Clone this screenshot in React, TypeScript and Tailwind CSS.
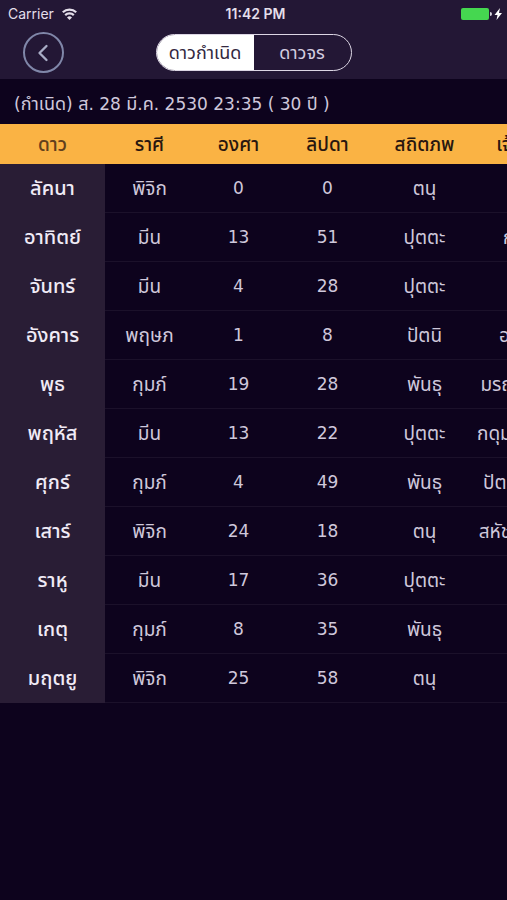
import React, { useState } from 'react';
import { ChevronLeft } from 'lucide-react';

interface PlanetRow {
  planet: string;
  sign: string;
  degree: number;
  minute: number;
  house: string;
  lord: string;
}

const rows: PlanetRow[] = [
  { planet: 'ลัคนา', sign: 'พิจิก', degree: 0, minute: 0, house: 'ตนุ', lord: '' },
  { planet: 'อาทิตย์', sign: 'มีน', degree: 13, minute: 51, house: 'ปุตตะ', lord: 'กรรมะ' },
  { planet: 'จันทร์', sign: 'มีน', degree: 4, minute: 28, house: 'ปุตตะ', lord: '' },
  { planet: 'อังคาร', sign: 'พฤษภ', degree: 1, minute: 8, house: 'ปัตนิ', lord: 'อริ, ตนุ' },
  { planet: 'พุธ', sign: 'กุมภ์', degree: 19, minute: 28, house: 'พันธุ', lord: 'มรณะ, ลาภะ' },
  { planet: 'พฤหัส', sign: 'มีน', degree: 13, minute: 22, house: 'ปุตตะ', lord: 'กดุมภะ, ปุตตะ' },
  { planet: 'ศุกร์', sign: 'กุมภ์', degree: 4, minute: 49, house: 'พันธุ', lord: 'ปัตนิ, วินาศ' },
  { planet: 'เสาร์', sign: 'พิจิก', degree: 24, minute: 18, house: 'ตนุ', lord: 'สหัชชะ, พันธุ' },
  { planet: 'ราหู', sign: 'มีน', degree: 17, minute: 36, house: 'ปุตตะ', lord: '' },
  { planet: 'เกตุ', sign: 'กุมภ์', degree: 8, minute: 35, house: 'พันธุ', lord: '' },
  { planet: 'มฤตยู', sign: 'พิจิก', degree: 25, minute: 58, house: 'ตนุ', lord: '' },
];

const StatusBar: React.FC = () => (
  <div className="grid h-7 grid-cols-3 items-center pl-2 pr-1 font-['Inter',sans-serif] text-sm text-[#e4dfea]">
    <div className="flex items-center gap-2">
      <span>Carrier</span>
      <svg width="15" height="12" viewBox="0 0 15 12" fill="none" stroke="currentColor" strokeWidth="2.2" aria-hidden>
        <path d="M.8 4.3a9.6 9.6 0 0 1 13.4 0" />
        <path d="M3.2 7.1a6.2 6.2 0 0 1 8.6 0" />
        <path d="M7.5 12L5 9.4a3.6 3.6 0 0 1 5 0z" fill="currentColor" stroke="none" />
      </svg>
    </div>
    <span className="text-center font-semibold">11:42 PM</span>
    <svg className="justify-self-end" width="42" height="14" viewBox="0 0 42 14" aria-hidden>
      <rect x="0" y="1" width="28" height="12" rx="2" fill="#45d750" />
      <path d="M29 5q2 0 2 2t-2 2z" fill="#d9d5e0" />
      <path d="M39 1l-5.500 7h3l-1 5 5.500-7h-3z" fill="#fff" />
    </svg>
  </div>
);

const App: React.FC = () => {
  const [tab, setTab] = useState<'birth' | 'transit'>('birth');

  const tabClass = (active: boolean) =>
    active ? 'flex-1 bg-white text-[#33283f]' : 'flex-1 bg-transparent text-[#d5cee0]';

  return (
    <div className="min-h-screen bg-[#0d031d] font-['DejaVu_Sans','Noto_Sans_Thai',sans-serif] text-[#cfc8db]">
      <header className="bg-[#231735]">
        <StatusBar />
        <div className="grid h-[51px] grid-cols-[1fr_196px_1fr] items-start pt-1">
          <button
            type="button"
            aria-label="ย้อนกลับ"
            className="ml-[23px] flex size-[41px] items-center justify-center rounded-full border-2 border-[#8087a9] pr-[2px] text-[#a9adc6]"
          >
            <ChevronLeft className="size-7" strokeWidth={2} />
          </button>
          <div className="mt-[2px] flex h-[37px] overflow-hidden rounded-full border border-[#dcd6e4] text-lg leading-8">
            <button type="button" className={tabClass(tab === 'birth')} onClick={() => setTab('birth')}>
              ดาวกำเนิด
            </button>
            <button type="button" className={tabClass(tab === 'transit')} onClick={() => setTab('transit')}>
              ดาวจร
            </button>
          </div>
        </div>
      </header>

      <h1 className="h-[45px] px-[14px] pt-[5px] text-[17px] leading-10">
        (<span className="text-lg leading-10">กำเนิด</span>) <span className="text-lg leading-10">ส</span>. 28{' '}
        <span className="text-lg leading-10">มี</span>.<span className="text-lg leading-10">ค</span>. 2530 23:35 ( 30{' '}
        <span className="text-lg leading-10">ปี</span> )
      </h1>

      <div className="overflow-x-auto [scrollbar-width:none]">
        <table className="w-full min-w-[577px] table-fixed border-separate border-spacing-0 whitespace-nowrap text-center text-[19px]">
          <colgroup>
            <col className="w-[105px]" />
            <col className="w-[89px]" />
            <col className="w-[89px]" />
            <col className="w-[89px]" />
            <col className="w-[105px]" />
            <col className="w-[100px]" />
          </colgroup>
          <thead>
            <tr className="h-10 bg-[#fab344] text-[#28160f] *:p-0 *:leading-7 *:font-medium">
              <th scope="col" className="sticky left-0 bg-[#fab344] text-[#62401c]">ดาว</th>
              <th scope="col">ราศี</th>
              <th scope="col">องศา</th>
              <th scope="col">ลิปดา</th>
              <th scope="col">สถิตภพ</th>
              <th scope="col">เจ้าเรือน</th>
            </tr>
          </thead>
          <tbody>
            {rows.map((row) => (
              <tr key={row.planet} className="h-[49px] *:border-b *:border-[#1b112a] *:p-0 *:leading-7">
                <th scope="row" className="sticky left-0 border-[#291d35]! bg-[#291d35] text-xl font-medium text-[#f0ebf6]">
                  {row.planet}
                </th>
                <td>{row.sign}</td>
                <td className="text-[17px]">{row.degree}</td>
                <td className="text-[17px]">{row.minute}</td>
                <td>{row.house}</td>
                <td>{row.lord}</td>
              </tr>
            ))}
          </tbody>
        </table>
      </div>
    </div>
  );
};

export default App;
